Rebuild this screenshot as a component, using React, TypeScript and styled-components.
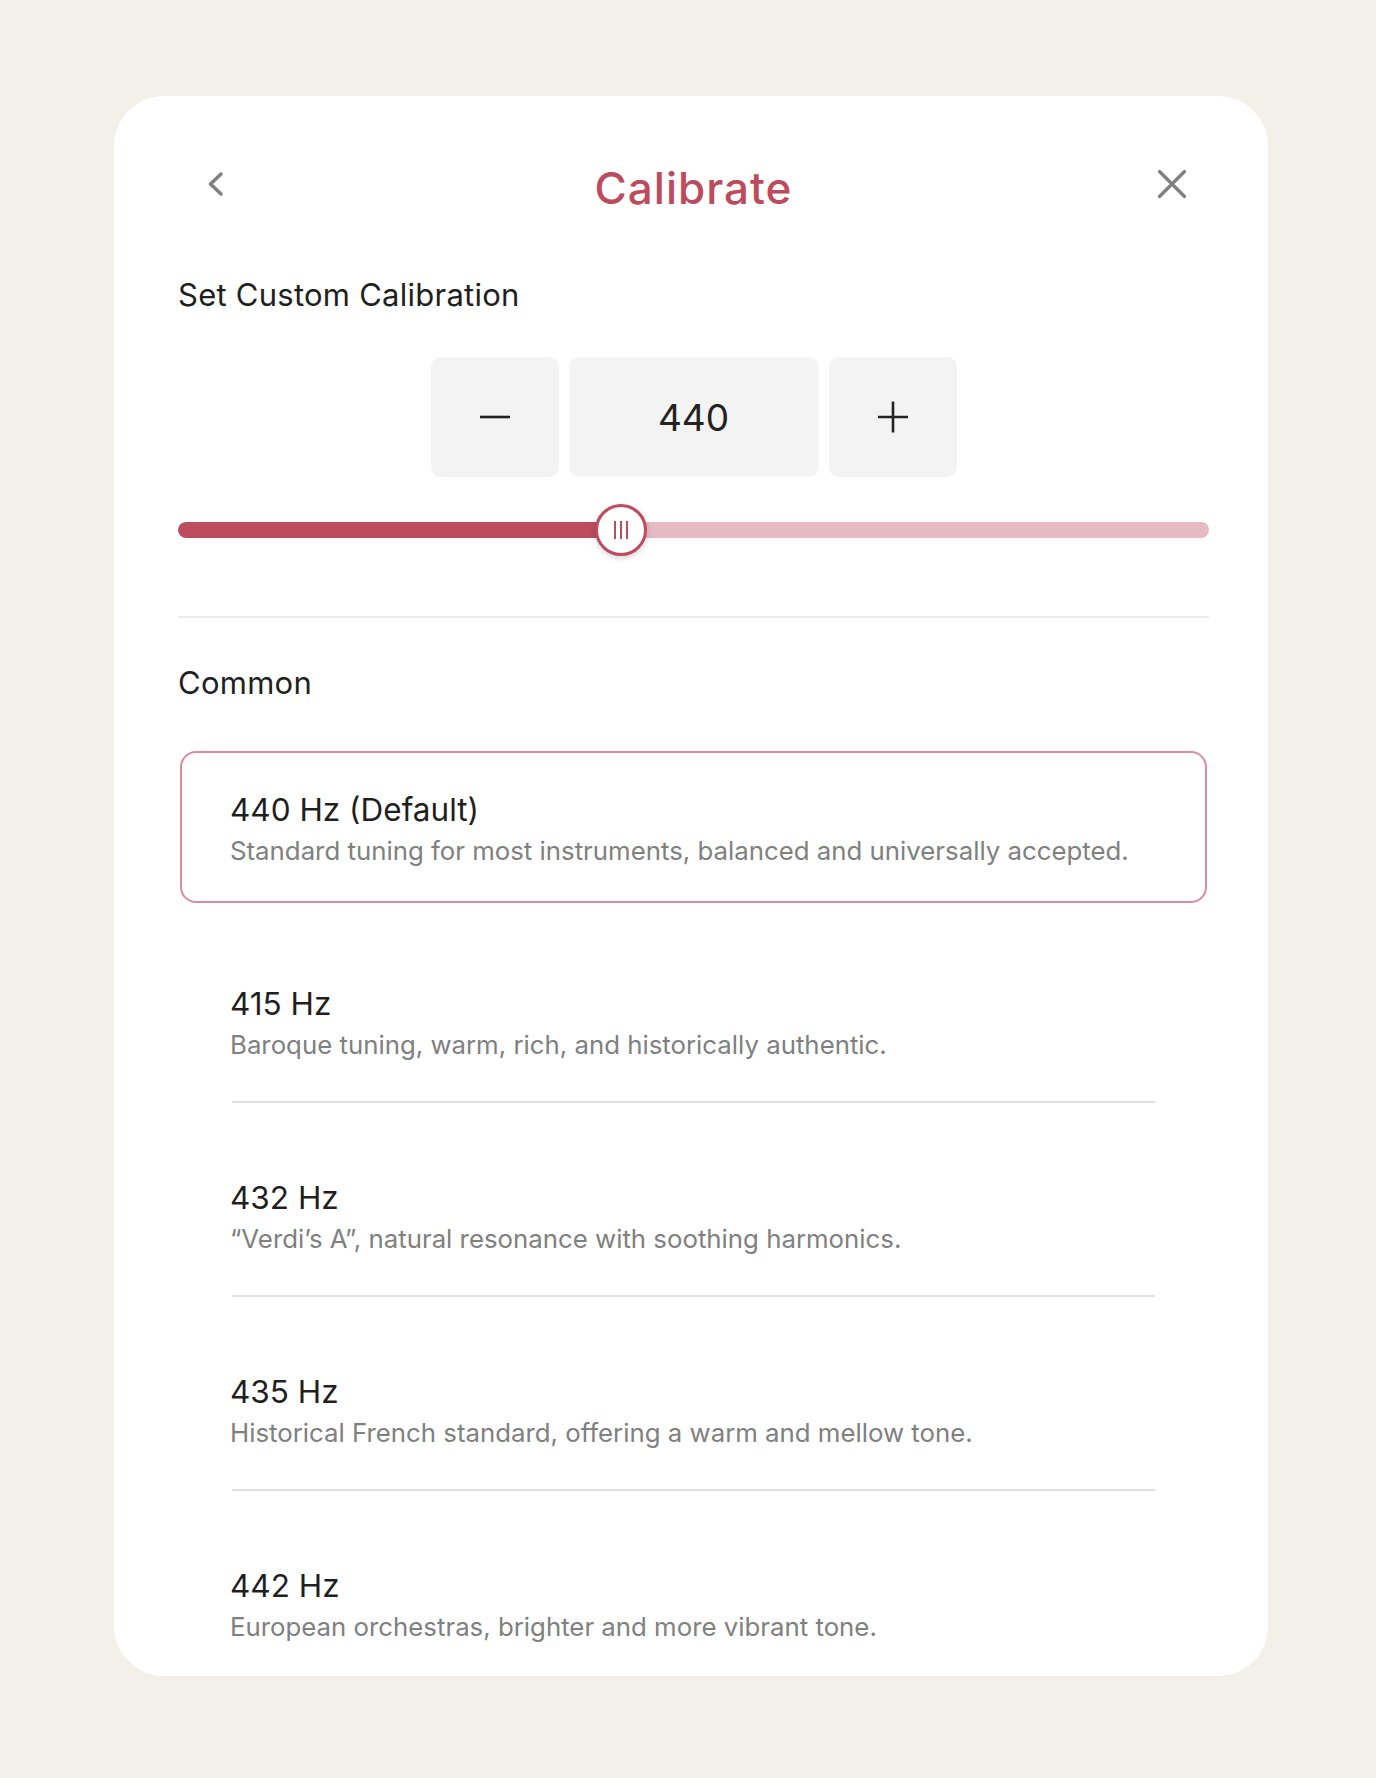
import React from "react";
import styled, { createGlobalStyle } from "styled-components";

const GlobalStyle = createGlobalStyle`
  html, body {
    margin: 0;
    padding: 0;
    background: #f3f0e9;
  }
  body {
    font-family: Inter, "Noto Sans", "Liberation Sans", sans-serif;
    -webkit-font-smoothing: antialiased;
  }
  * { box-sizing: border-box; }
`;

const Page = styled.div`
  min-height: 1778px;
  padding: 96px 0 102px 114px;
  background: #f3f0e9;
`;

const Card = styled.section`
  width: 1154px;
  height: 1580px;
  overflow: hidden;
  background: #ffffff;
  border-radius: 50px;
  padding: 64px 59px 0 64px;
  display: flex;
  flex-direction: column;

  & > * {
    flex-shrink: 0;
  }
`;

const Header = styled.header`
  display: flex;
  align-items: flex-start;
  justify-content: space-between;
  padding: 0 13px;
`;

const IconButton = styled.button`
  width: 48px;
  height: 48px;
  padding: 0;
  border: none;
  background: transparent;
  display: flex;
  align-items: center;
  justify-content: center;
  color: #7f7f7f;
  cursor: pointer;
`;

const Title = styled.h1`
  margin: 6px 0 0;
  font-size: 44px;
  line-height: 1;
  font-weight: 500;
  color: #bd4b5e;
  letter-spacing: 1px;
`;

const SectionHeading = styled.h2<{ $gap: number }>`
  margin: ${(p) => p.$gap}px 0 0;
  font-size: 31px;
  line-height: 1;
  font-weight: 400;
  letter-spacing: 0.25px;
  color: #1f1f1f;
`;

const Stepper = styled.div`
  margin-top: 47px;
  display: flex;
  justify-content: center;
  gap: 10px;
`;

const StepButton = styled.button`
  width: 128px;
  height: 120px;
  border: none;
  border-radius: 10px;
  background: #f3f3f3;
  display: flex;
  align-items: center;
  justify-content: center;
  color: #222222;
  padding: 0;
  cursor: pointer;
`;

const ValueBox = styled.div`
  width: 250px;
  height: 120px;
  border-radius: 10px;
  border: 1px solid #f8f8f8;
  background: #f3f3f3;
  display: flex;
  align-items: center;
  justify-content: center;
  font-size: 37px;
  line-height: 1;
  color: #222222;
`;

const SliderWrap = styled.div`
  position: relative;
  margin-top: 27px;
  height: 52px;
  display: flex;
  align-items: center;
`;

const Track = styled.div`
  position: relative;
  width: 100%;
  height: 16px;
  border-radius: 8px;
  background: #e6bac3;
  overflow: hidden;
`;

const Fill = styled.div`
  height: 100%;
  background: #bd4c5f;
  border-radius: 8px 0 0 8px;
`;

const Thumb = styled.div`
  position: absolute;
  top: 0;
  width: 52px;
  height: 52px;
  margin-left: -26px;
  border-radius: 50%;
  background: #ffffff;
  border: 3px solid #bd4c5f;
  box-shadow: 0 2px 6px rgba(0, 0, 0, 0.18);
  display: flex;
  align-items: center;
  justify-content: center;
  gap: 4px;
`;

const Grip = styled.span`
  width: 2px;
  height: 18px;
  background: #bd4c5f;
`;

const Divider = styled.hr`
  margin: 60px 0 0;
  border: none;
  height: 2px;
  background: #ececec;
`;

const OptionList = styled.ul`
  list-style: none;
  margin: 53px 2px 0;
  padding: 0;
  display: flex;
  flex-direction: column;
`;

const OptionItem = styled.li`
  display: flex;
  flex-direction: column;
`;

const OptionCard = styled.button<{ $selected: boolean }>`
  width: 100%;
  height: 152px;
  text-align: left;
  background: #ffffff;
  border: 2px solid ${(p) => (p.$selected ? "#dc8c9b" : "transparent")};
  border-radius: 16px;
  padding: 41px 48px 37px;
  font-family: inherit;
  cursor: pointer;
  display: flex;
  flex-direction: column;
`;

const OptionTitle = styled.span`
  font-size: 31.5px;
  line-height: 1;
  font-weight: 400;
  color: #1f1f1f;
`;

const OptionDesc = styled.span`
  margin-top: 12px;
  font-size: 25.8px;
  line-height: 1;
  color: #808080;
`;

const Separator = styled.div<{ $hidden: boolean }>`
  margin: 4px 52px 36px;
  height: 2px;
  background: ${(p) => (p.$hidden ? "transparent" : "#e0e0e0")};
`;

const options = [
  {
    title: "440 Hz (Default)",
    desc: "Standard tuning for most instruments, balanced and universally accepted.",
  },
  { title: "415 Hz", desc: "Baroque tuning, warm, rich, and historically authentic." },
  { title: "432 Hz", desc: "\u201CVerdi\u2019s A\u201D, natural resonance with soothing harmonics." },
  { title: "435 Hz", desc: "Historical French standard, offering a warm and mellow tone." },
  { title: "442 Hz", desc: "European orchestras, brighter and more vibrant tone." },
];

export default function App() {
  const selected = 0;
  const ratio = 0.43;
  return (
    <>
      <GlobalStyle />
      <Page>
        <Card>
          <Header>
            <IconButton aria-label="Back">
              <svg width="48" height="48" viewBox="0 0 48 48" fill="none">
                <path
                  d="M30 14 L19.5 24 L30 34"
                  stroke="currentColor"
                  strokeWidth="3.5"
                  strokeLinecap="round"
                  strokeLinejoin="round"
                />
              </svg>
            </IconButton>
            <Title>Calibrate</Title>
            <IconButton aria-label="Close">
              <svg width="48" height="48" viewBox="0 0 48 48" fill="none">
                <path
                  d="M11.5 11.5 L36.5 36.5 M36.5 11.5 L11.5 36.5"
                  stroke="currentColor"
                  strokeWidth="3.2"
                  strokeLinecap="round"
                />
              </svg>
            </IconButton>
          </Header>

          <SectionHeading $gap={69}>Set Custom Calibration</SectionHeading>

          <Stepper>
            <StepButton aria-label="Decrease">
              <svg width="32" height="32" viewBox="0 0 32 32" fill="none">
                <path d="M1 16 H31" stroke="currentColor" strokeWidth="2.6" />
              </svg>
            </StepButton>
            <ValueBox>440</ValueBox>
            <StepButton aria-label="Increase">
              <svg width="32" height="32" viewBox="0 0 32 32" fill="none">
                <path d="M1 16 H31 M16 0.5 V31.5" stroke="currentColor" strokeWidth="2.6" />
              </svg>
            </StepButton>
          </Stepper>

          <SliderWrap>
            <Track>
              <Fill style={{ width: `${ratio * 100}%` }} />
            </Track>
            <Thumb style={{ left: `${ratio * 100}%` }}>
              <Grip />
              <Grip />
              <Grip />
            </Thumb>
          </SliderWrap>

          <Divider />

          <SectionHeading $gap={49}>Common</SectionHeading>

          <OptionList>
            {options.map((o, i) => (
              <OptionItem key={o.title}>
                <OptionCard $selected={i === selected}>
                  <OptionTitle>{o.title}</OptionTitle>
                  <OptionDesc>{o.desc}</OptionDesc>
                </OptionCard>
                <Separator $hidden={i === selected || i === options.length - 1} />
              </OptionItem>
            ))}
          </OptionList>
        </Card>
      </Page>
    </>
  );
}
